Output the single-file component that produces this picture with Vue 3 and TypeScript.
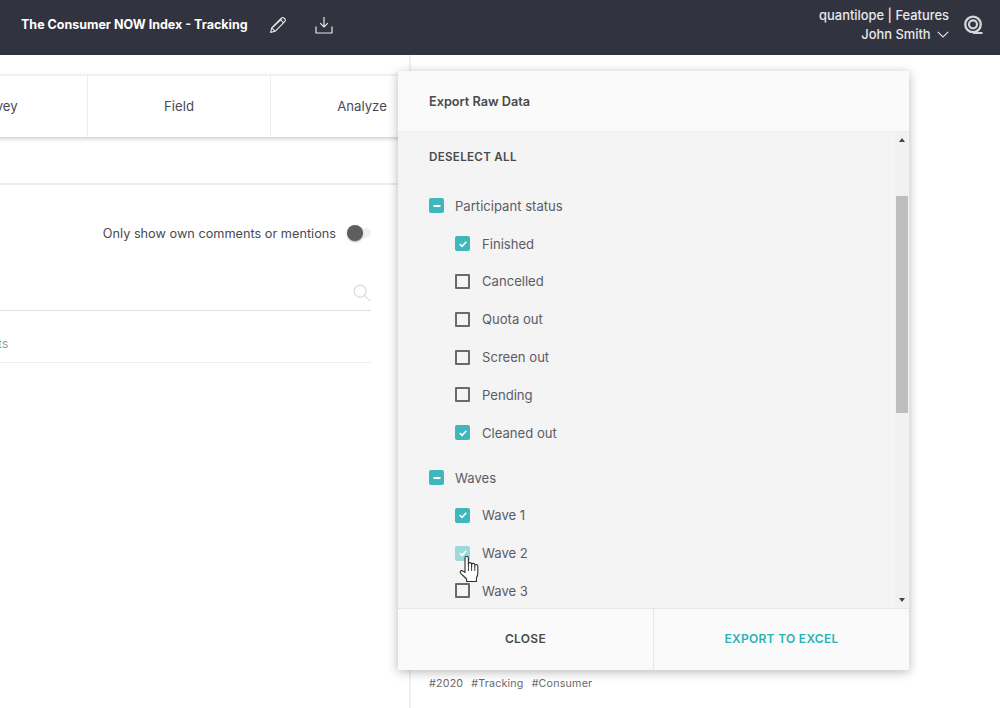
<script setup lang="ts">
import { ref } from "vue";

interface Option {
  label: string;
  checked: boolean;
  hover?: boolean;
}
interface Group {
  title: string;
  options: Option[];
}

const groups = ref<Group[]>([
  {
    title: "Participant status",
    options: [
      { label: "Finished", checked: true },
      { label: "Cancelled", checked: false },
      { label: "Quota out", checked: false },
      { label: "Screen out", checked: false },
      { label: "Pending", checked: false },
      { label: "Cleaned out", checked: true },
    ],
  },
  {
    title: "Waves",
    options: [
      { label: "Wave 1", checked: true },
      { label: "Wave 2", checked: true, hover: true },
      { label: "Wave 3", checked: false },
    ],
  },
]);

const tabs = ["Survey", "Field", "Analyze"];
const tags = ["2020", "Tracking", "Consumer"];
</script>

<template>
  <div class="page">
    <header class="topbar">
      <div class="topbar-left">
        <span class="study-title">The Consumer NOW Index - Tracking</span>
        <svg class="icon-pen" width="18" height="18" viewBox="0 0 18 18" fill="none" stroke="#e8e8ea" stroke-width="1.1" stroke-linejoin="round">
          <path d="M1.6 16.4l1.1-4.5L12.6 2a1.6 1.6 0 0 1 2.3 0l1 1a1.6 1.6 0 0 1 0 2.3L6.1 15.3z" />
          <path d="M11.2 3.4l3.4 3.4M2.7 11.9l3.4 3.4M4 11.2l8.4-8.2" />
        </svg>
        <svg class="icon-download" width="18" height="18" viewBox="0 0 18 18" fill="none" stroke="#e8e8ea" stroke-width="1.2">
          <path d="M9 1v10M5.2 7.2L9 11l3.8-3.8" />
          <path d="M1 10.5V17h16v-6.5" />
        </svg>
      </div>
      <div class="topbar-right">
        <div class="account">
          <span>quantilope | Features</span>
          <span class="user">
            John Smith
            <svg width="12" height="7" viewBox="0 0 12 7" fill="none" stroke="#e8e8ea" stroke-width="1.1"><path d="M.8.8L6 6l5.2-5.2" /></svg>
          </span>
        </div>
        <svg class="logo" width="20" height="20" viewBox="0 0 18 18" fill="none" stroke="#d5d5d8">
          <circle cx="9" cy="8.4" r="7" stroke-width="2.1" />
          <circle cx="9" cy="8.4" r="3.6" stroke-width="1.9" />
          <path d="M9 16.2h8.6" stroke-width="1.8" />
        </svg>
      </div>
    </header>

    <main class="content">
      <section class="left-col">
        <nav class="tabs">
          <div v-for="tab in tabs" :key="tab" class="tab">{{ tab }}</div>
        </nav>
        <div class="subbar"></div>
        <div class="comments">
          <div class="own-row">
            <span>Only show own comments or mentions</span>
            <span class="toggle"><span class="knob"></span></span>
          </div>
          <div class="search-row">
            <svg width="18" height="18" viewBox="0 0 18 18" fill="none" stroke="#dcdcdc" stroke-width="1.2">
              <circle cx="7.2" cy="7.2" r="6" />
              <path d="M11.6 11.6l5.6 5.6" />
            </svg>
          </div>
          <div class="count-row"><span>0 comments</span></div>
        </div>
      </section>
      <section class="right-col">
        <div class="tags">
          <span v-for="tag in tags" :key="tag">#{{ tag }}</span>
        </div>
      </section>
    </main>

    <div class="modal">
      <div class="modal-header">Export Raw Data</div>
      <div class="modal-body">
        <div class="list">
          <div class="deselect">DESELECT ALL</div>
          <div v-for="group in groups" :key="group.title" class="group">
            <div class="group-title">
              <span class="box on">
                <svg width="10" height="10" viewBox="0 0 10 10"><path d="M1.5 5h7" stroke="#fff" stroke-width="2" /></svg>
              </span>
              {{ group.title }}
            </div>
            <div v-for="opt in group.options" :key="opt.label" class="option">
              <span class="box" :class="{ on: opt.checked, faded: opt.hover }">
                <svg v-if="opt.checked" width="10" height="10" viewBox="0 0 10 10" fill="none"><path d="M1.8 5.2l2.3 2.2 4.2-4.6" stroke="#fff" stroke-width="1.6" /></svg>
              </span>
              {{ opt.label }}
            </div>
          </div>
        </div>
        <div class="scrollbar">
          <span class="arrow up"></span>
          <div class="track"><div class="thumb"></div></div>
          <span class="arrow down"></span>
        </div>
      </div>
      <div class="modal-footer">
        <button class="foot-btn" type="button">CLOSE</button>
        <button class="foot-btn export" type="button">EXPORT TO EXCEL</button>
      </div>
    </div>

    <svg class="cursor" width="21" height="29" viewBox="0 0 21 29" stroke="#2c2c2c" stroke-width="1.1" fill="#fff" stroke-linejoin="round">
      <path d="M6 16.5V3a1.7 1.7 0 0 1 3.4 0v7.5V9.2a1.6 1.6 0 0 1 3.2 0v2V10a1.6 1.6 0 0 1 3.2 0v1.8-.8a1.5 1.5 0 0 1 3 0v7c0 2-.5 3.4-1.4 5v3.5H7.6V24L2 18.6c-1.5-1.6-.6-3.2.8-3 1 .1 2 1 3.2 1.9z" />
      <path d="M9.4 11v5M12.6 11v5M15.8 11.5V16" fill="none" stroke-width=".9" />
    </svg>
  </div>
</template>

<style scoped>
.page {
  position: relative;
  width: 1000px;
  height: 708px;
  overflow: hidden;
  background: #fff;
  font-family: Inter, "Liberation Sans", sans-serif;
  color: #4a4a52;
  font-size: 13px;
}

.topbar {
  height: 55px;
  background: #31333f;
  color: #f0f0f2;
  display: flex;
  justify-content: space-between;
  align-items: center;
  padding: 0 17px 0 21px;
  box-sizing: border-box;
}
.topbar-left {
  display: flex;
  align-items: center;
  padding-bottom: 6px;
}
.study-title {
  font-weight: 700;
  font-size: 12.5px;
  color: #fff;
  width: 248px;
  white-space: nowrap;
}
.icon-pen {
  margin-right: 28px;
}
.topbar-right {
  display: flex;
  align-items: center;
  gap: 14px;
  padding-bottom: 5px;
}
.account {
  display: flex;
  flex-direction: column;
  align-items: flex-end;
  gap: 3px;
  font-size: 12.9px;
  font-weight: 500;
  line-height: 16px;
  color: #e8e8ea;
}
.user svg {
  margin-left: 3px;
  vertical-align: 1px;
}

.content {
  display: flex;
  height: 653px;
}
.left-col {
  width: 409px;
  flex: none;
  border-right: 2px solid #f0f0f0;
  box-sizing: content-box;
}
.tabs {
  display: flex;
  margin: 21px 0 0 -95px;
  width: 550px;
  height: 61px;
  box-shadow: 0 1px 5px rgba(0, 0, 0, 0.25);
}
.tab {
  width: 183px;
  border-right: 1px solid #ececec;
  display: flex;
  align-items: center;
  justify-content: center;
  padding-bottom: 2px;
  box-sizing: border-box;
  font-size: 13.2px;
}
.subbar {
  height: 46px;
  border-bottom: 2px solid #ececec;
}
.comments {
  padding-right: 38px;
}
.own-row {
  display: flex;
  justify-content: flex-end;
  align-items: center;
  gap: 11px;
  margin-top: 38px;
  height: 20px;
  font-size: 12.72px;
}
.toggle {
  display: block;
  position: relative;
  width: 24px;
  height: 10px;
  border-radius: 5px;
  background: #f1f1f1;
}
.knob {
  position: absolute;
  left: 0;
  top: -3px;
  width: 16px;
  height: 16px;
  border-radius: 50%;
  background: #5e5e60;
  box-shadow: 0 1px 2px rgba(0, 0, 0, 0.3);
}
.search-row {
  display: flex;
  justify-content: flex-end;
  align-items: flex-start;
  margin-top: 41px;
  height: 26px;
  border-bottom: 1px solid #dedede;
}
.count-row {
  height: 52px;
  box-sizing: border-box;
  padding-top: 14px;
  border-bottom: 1px solid #efefef;
  display: flex;
  align-items: center;
  font-size: 12px;
  color: #9a9a9a;
}
.count-row span {
  margin-left: -62px;
  white-space: nowrap;
}
.right-col {
  flex: 1;
  position: relative;
}
.tags {
  display: flex;
  gap: 8px;
  margin: 622px 0 0 18px;
  font-size: 10.7px;
  letter-spacing: 0.2px;
  color: #6a6a6a;
}

.modal {
  position: absolute;
  left: 398px;
  top: 71px;
  width: 511px;
  height: 599px;
  display: flex;
  flex-direction: column;
  background: #fafafa;
  box-shadow: 0 2px 10px rgba(0, 0, 0, 0.28);
}
.modal-header {
  height: 60px;
  flex: none;
  display: flex;
  align-items: center;
  padding-left: 31px;
  font-size: 12.7px;
  font-weight: 600;
  color: #4a4a4a;
}
.modal-body {
  flex: 1;
  min-height: 0;
  display: flex;
  overflow: hidden;
  background: #f4f4f4;
  border-top: 1px solid #eeeeee;
  border-bottom: 1px solid #e6e6e6;
}
.list {
  flex: 1;
  padding: 18px 0 0 31px;
  overflow: hidden;
}
.deselect {
  font-size: 11.6px;
  font-weight: 600;
  letter-spacing: 0.3px;
  line-height: 14px;
  color: #4a4a4a;
  margin-bottom: 23px;
}
.group-title,
.option {
  display: flex;
  align-items: center;
  height: 38px;
  margin-top: -0.2px;
  font-size: 13.1px;
  color: #5b5b66;
  white-space: nowrap;
}
.group + .group {
  margin-top: 7px;
}
.group-title .box {
  margin-right: 11px;
}
.option {
  padding-left: 26px;
}
.box {
  display: flex;
  align-items: center;
  justify-content: center;
  width: 15px;
  height: 15px;
  box-sizing: border-box;
  border: 2px solid #6a6a6a;
  border-radius: 1px;
  margin-right: 12px;
  flex: none;
}
.box.on {
  background: #3fb8bb;
  border: none;
  border-radius: 2px;
}
.box.faded {
  background: #9bd9da;
}
.scrollbar {
  width: 13px;
  margin-right: 1px;
  flex: none;
  background: #f1f1f1;
  display: flex;
  flex-direction: column;
  align-items: center;
}
.arrow {
  width: 0;
  height: 0;
  border-left: 3.5px solid transparent;
  border-right: 3.5px solid transparent;
  flex: none;
}
.arrow.up {
  border-bottom: 4px solid #444;
  margin-top: 6px;
}
.arrow.down {
  border-top: 4px solid #444;
  margin-bottom: 6px;
}
.track {
  flex: 1;
  width: 100%;
}
.thumb {
  width: 12px;
  margin: 54px auto 0;
  height: 217px;
  background: #bdbdbd;
}

.modal-footer {
  height: 61px;
  flex: none;
  display: flex;
}
.foot-btn {
  flex: 1;
  border: none;
  background: transparent;
  padding: 0 0 2px;
  font: 600 12px Inter, "Liberation Sans", sans-serif;
  letter-spacing: 0.3px;
  color: #4a4a4a;
}
.foot-btn + .foot-btn {
  border-left: 1px solid #e6e6e6;
}
.foot-btn.export {
  color: #2cb2b5;
}

.cursor {
  position: absolute;
  left: 459px;
  top: 555px;
}
</style>
